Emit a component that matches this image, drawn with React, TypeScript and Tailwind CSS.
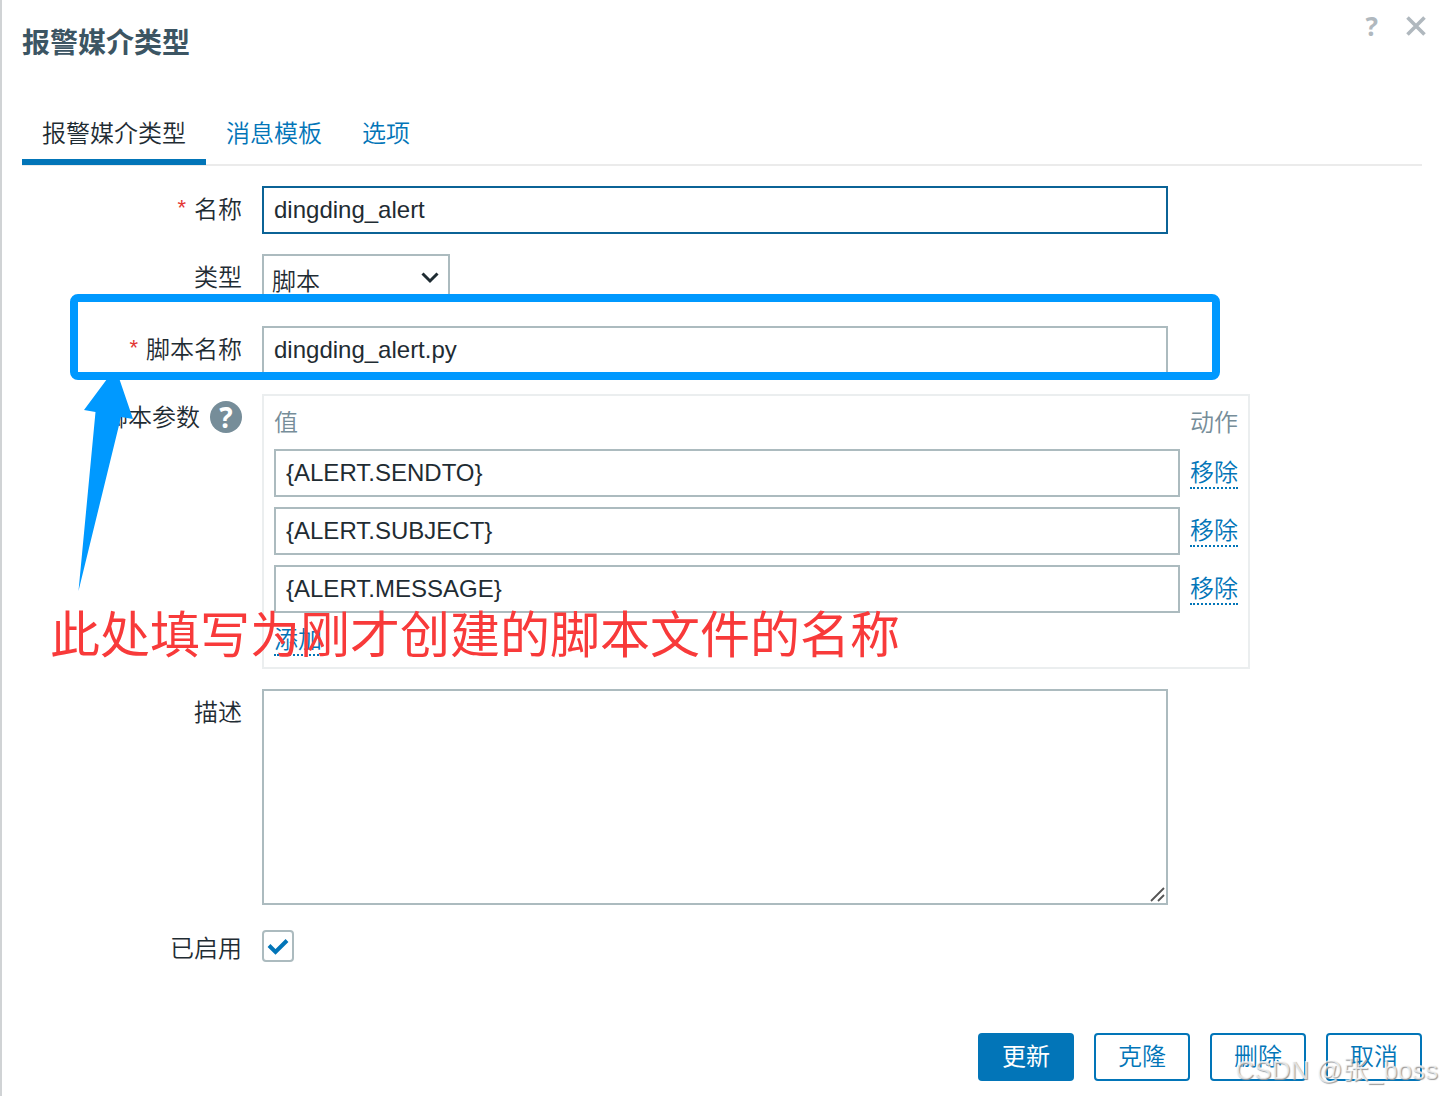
import { useState } from "react";
import type { ReactNode } from "react";

const inputClass =
  "block h-12 w-full border-2 bg-white px-2.5 text-2xl text-[#1f2c33] outline-none";

const linkClass =
  "block border-b-2 border-dotted border-[#0275b8] pt-0.5 text-2xl leading-7 text-[#0275b8]";

const initialParams = ["{ALERT.SENDTO}", "{ALERT.SUBJECT}", "{ALERT.MESSAGE}"];

type RowProps = {
  label: string;
  htmlFor?: string;
  required?: boolean;
  help?: boolean;
  children: ReactNode;
};

const FormRow = ({ label, htmlFor, required, help, children }: RowProps) => (
  <div className="flex gap-5">
    <div className="flex h-12 w-[220px] shrink-0 items-center justify-end text-2xl">
      {required && <span className="mr-2 pb-1 text-[22px] text-[#e33734]">*</span>}
      <label htmlFor={htmlFor}>{label}</label>
      {help && (
        <button
          type="button"
          aria-label="帮助"
          className="mb-0.5 ml-2.5 flex size-8 items-center justify-center rounded-full bg-[#768d99] font-['Noto_Sans',sans-serif] text-[28px] leading-8 font-bold text-white"
        >
          ?
        </button>
      )}
    </div>
    <div className="min-w-0 flex-1">{children}</div>
  </div>
);

const Header = () => (
  <header className="flex items-start justify-between">
    <h1 className="pt-[22px] text-[28px] leading-11 font-bold text-[#3c5563]">报警媒介类型</h1>
    <div className="-mr-1 flex items-center gap-7 pt-2 text-[#b0b8be]">
      <button
        type="button"
        aria-label="帮助"
        className="font-['Noto_Sans',sans-serif] text-[26px] leading-9 font-bold"
      >
        ?
      </button>
      <button type="button" aria-label="关闭">
        <svg width="20" height="20" viewBox="0 0 20 20" stroke="currentColor" strokeWidth="3.6">
          <path d="M1.5 1.5l17 17M18.5 1.5l-17 17" />
        </svg>
      </button>
    </div>
  </header>
);

const Tabs = () => (
  <nav className="mt-[34px] flex border-b-2 border-[#ebebeb] text-2xl leading-9 text-[#0275b8]">
    <a href="#type" className="-mb-px border-b-6 border-[#0275b8] px-5 pt-4 pb-[7px] text-[#1f2c33]">
      报警媒介类型
    </a>
    <a href="#templates" className="px-5 pt-4">
      消息模板
    </a>
    <a href="#options" className="px-5 pt-4">
      选项
    </a>
  </nav>
);

const ParamsTable = () => {
  const [params, setParams] = useState(initialParams);

  return (
    <div className="w-full max-w-[988px] border-2 border-[#ebeeef]">
      <table className="w-full border-collapse text-2xl">
        <thead>
          <tr className="h-12 text-left text-[#768d99]">
            <th className="pt-1.5 pl-2.5 font-[350]">值</th>
            <th className="w-[68px] px-2.5 pt-1.5 font-[350]">动作</th>
          </tr>
        </thead>
        <tbody>
          {params.map((param, i) => (
            <tr key={i}>
              <td className="py-[5px] pl-2.5">
                <input
                  aria-label={`值 ${i + 1}`}
                  className={`${inputClass} border-[#acbbbf]`}
                  value={param}
                  onChange={(e) => setParams(params.map((p, j) => (j === i ? e.target.value : p)))}
                />
              </td>
              <td className="px-2.5 whitespace-nowrap">
                <button
                  type="button"
                  className={linkClass}
                  onClick={() => setParams(params.filter((_, j) => j !== i))}
                >
                  移除
                </button>
              </td>
            </tr>
          ))}
          <tr>
            <td colSpan={2} className="pt-1.5 pb-[11px] pl-2.5">
              <button type="button" className={linkClass} onClick={() => setParams([...params, ""])}>
                添加
              </button>
            </td>
          </tr>
        </tbody>
      </table>
    </div>
  );
};

// Hand-drawn marks laid over the form
const Annotations = () => (
  <div className="pointer-events-none">
    <div className="absolute top-[294px] left-[70px] h-[86px] w-[1150px] rounded-lg border-8 border-[#0099ff]" />
    <svg className="absolute top-[370px] left-[76px]" width="60" height="224" viewBox="0 0 60 224" fill="#0099ff">
      <path d="M34 5L42 5L57 49L45 47L2.5 221L19.5 42L8 40Z" />
    </svg>
    <p className="absolute top-[600px] left-[50px] text-[50px] leading-[72px] font-normal whitespace-nowrap text-[#f83a3a]">
      此处填写为刚才创建的脚本文件的名称
    </p>
  </div>
);

const outlineButton =
  "h-12 w-24 rounded-sm border-2 border-[#0275b8] bg-white text-2xl leading-8 text-[#0275b8]";

export default function App() {
  const [name, setName] = useState("dingding_alert");
  const [script, setScript] = useState("dingding_alert.py");
  const [enabled, setEnabled] = useState(true);

  return (
    <div className="relative min-h-screen overflow-hidden border-l-2 border-[#d0d3d5] bg-white px-5 pb-[15px] font-['Liberation_Sans','Noto_Sans_CJK_SC',sans-serif] font-[350] text-[#1f2c33]">
      <Header />
      <Tabs />

      <form className="mt-5" onSubmit={(e) => e.preventDefault()}>
        <div className="flex flex-col gap-5">
          <FormRow label="名称" htmlFor="name" required>
            <input
              id="name"
              className={`${inputClass} max-w-[906px] border-[#0b6396]`}
              value={name}
              onChange={(e) => setName(e.target.value)}
            />
          </FormRow>

          <FormRow label="类型" htmlFor="type">
            <div className="relative mb-1 w-[188px]">
              <select
                id="type"
                className="h-12 w-full appearance-none border-2 border-[#acbbbf] bg-white pt-2 pl-2 text-2xl outline-none"
              >
                <option>脚本</option>
              </select>
              <svg
                className="pointer-events-none absolute top-[18px] right-[11px]"
                width="18"
                height="12"
                viewBox="0 0 18 12"
                fill="none"
                stroke="#1f2c33"
                strokeWidth="3"
              >
                <path d="M1.5 1.5L9 9L16.5 1.5" />
              </svg>
            </div>
          </FormRow>

          <FormRow label="脚本名称" htmlFor="script" required>
            <input
              id="script"
              className={`${inputClass} max-w-[906px] border-[#acbbbf]`}
              value={script}
              onChange={(e) => setScript(e.target.value)}
            />
          </FormRow>

          <FormRow label="脚本参数" help>
            <ParamsTable />
          </FormRow>

          <FormRow label="描述" htmlFor="description">
            <div className="relative max-w-[906px]">
              <textarea
                id="description"
                className="block h-[216px] w-full resize-none border-2 border-[#acbbbf] bg-white p-2 text-2xl outline-none"
              />
              <svg
                className="pointer-events-none absolute right-[3px] bottom-[3px]"
                width="15"
                height="15"
                viewBox="0 0 15 15"
                stroke="#555"
                strokeWidth="1.8"
              >
                <path d="M1 14L14 1M8 14L14 8" />
              </svg>
            </div>
          </FormRow>

          <FormRow label="已启用" htmlFor="enabled">
            <div className="relative mt-[5px] size-8">
              <input
                id="enabled"
                type="checkbox"
                className="block size-8 appearance-none rounded-sm border-2 border-[#acbbbf] bg-white"
                checked={enabled}
                onChange={(e) => setEnabled(e.target.checked)}
              />
              {enabled && (
                <svg
                  className="pointer-events-none absolute inset-0"
                  width="32"
                  height="32"
                  viewBox="0 0 32 32"
                  fill="none"
                  stroke="#0275b8"
                  strokeWidth="4"
                >
                  <path d="M7 15.5L13.5 22L25 10.5" />
                </svg>
              )}
            </div>
          </FormRow>
        </div>

        <div className="mt-[60px] flex justify-end gap-5">
          <button
            type="submit"
            className="h-12 w-24 rounded-sm bg-[#0275b8] text-2xl leading-8 font-normal text-white"
          >
            更新
          </button>
          <button type="button" className={outlineButton}>
            克隆
          </button>
          <button type="button" className={outlineButton}>
            删除
          </button>
          <button type="button" className={outlineButton}>
            取消
          </button>
        </div>
      </form>

      <div className="absolute top-0 -left-0.5">
        <Annotations />
      </div>
      <span className="pointer-events-none absolute right-1 bottom-2 text-[26px] leading-9 text-white/70 [text-shadow:1px_1px_1px_#999]">
        CSDN @张_boss
      </span>
    </div>
  );
}
